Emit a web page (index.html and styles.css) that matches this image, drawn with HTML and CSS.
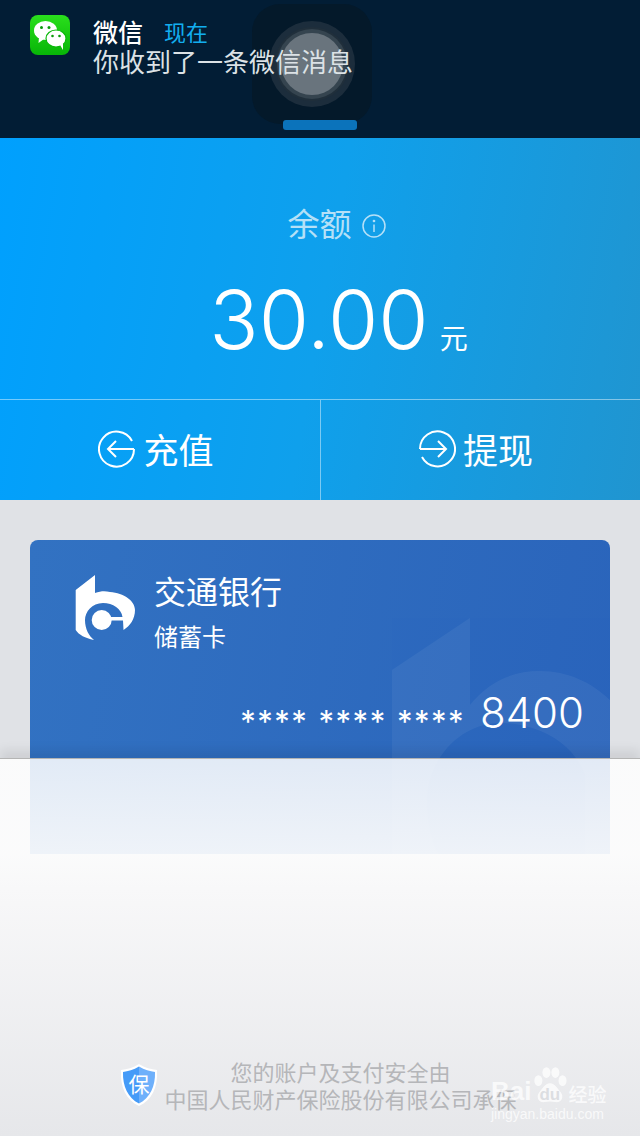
FILE: index.html
```html
<!DOCTYPE html>
<html lang="zh-CN">
<head>
  <meta charset="UTF-8">
  <meta name="viewport" content="width=device-width, initial-scale=1.0">
  <title>余额</title>
  <link rel="stylesheet" href="styles.css">
</head>
<body>
  <div class="page">
    <header class="banner">
      <div class="home-key">
        <div class="home-ring"><div class="home-disc"></div></div>
      </div>
      <div class="home-bar"></div>
      <div class="wx-icon">
        <svg width="40" height="40" viewBox="0 0 40 40">
          <ellipse cx="15.5" cy="15.5" ry="9.5" rx="11.5" fill="#fff"/>
          <path d="M9 22 8.500 28 14 24Z" fill="#fff"/>
          <ellipse cx="26" cy="23.500" rx="10" ry="8.500" fill="#fff" stroke="#0ab80a" stroke-width="1.200"/>
          <path d="M30 30 33 35 33 28Z" fill="#fff"/>
          <circle cx="11.500" cy="12.500" r="1.500" fill="#0a9a0a"/>
          <circle cx="19" cy="12.500" r="1.500" fill="#0a9a0a"/>
          <circle cx="22.500" cy="21" r="1.300" fill="#0a9a0a"/>
          <circle cx="29.500" cy="21" r="1.300" fill="#0a9a0a"/>
        </svg>
      </div>
      <div class="banner-text">
        <div class="banner-head">
          <span class="app-name">微信</span>
          <span class="app-time">现在</span>
        </div>
        <div class="banner-msg">你收到了一条微信消息</div>
      </div>
    </header>

    <section class="balance">
      <div class="balance-top">
        <div class="balance-label">
          <span>余额</span>
          <svg width="24" height="24" viewBox="0 0 24 24" fill="none" stroke="#b5e0f7" stroke-width="1.500">
            <circle cx="12" cy="12" r="11"/>
            <path d="M12 10.500V18"/>
            <circle cx="12" cy="7" r=".6"/>
          </svg>
        </div>
        <div class="balance-amount">
          <span class="amount">30.00</span>
          <span class="unit">元</span>
        </div>
      </div>
      <div class="actions">
        <div class="action">
          <svg width="38" height="38" viewBox="0 0 38 38" fill="none" stroke="#fff" stroke-width="2">
            <path d="M36 19A17.500 17.500 0 1 1 34 11"/>
            <path d="M36 19H11M18 11 10 19 18 27"/>
          </svg>
          <span>充值</span>
        </div>
        <div class="action">
          <svg width="38" height="38" viewBox="0 0 38 38" fill="none" stroke="#fff" stroke-width="2">
            <path d="M2 19A17.500 17.500 0 1 1 4 27"/>
            <path d="M2 19H27M20 11 28 19 20 27"/>
          </svg>
          <span>提现</span>
        </div>
      </div>
    </section>

    <main class="content">
      <div class="card">
        <svg class="card-mark" viewBox="0 0 248 272">
          <path d="M2 60 80 8V95C100 70 125 61 150 61 200 61 245 100 245 150V272H195V165C185 135 150 113 110 113 70 113 37 150 37 190 37 230 50 255 70 272H2Z"/>
        </svg>
        <div class="card-head">
          <svg class="card-logo" viewBox="0 0 62 68">
            <path d="M.7 17 20 2V20C26 18 30 18 35 19 49 20 60 28 60 37 60 46 55 53 48.5 57L48 47.5H30V44H47.5C46.5 36 38 30 28 30 17 30 10 39 10 47 10 56 14 63 19 67 10 65 4 62 .7 57Z"/>
            <circle cx="26.7" cy="47" r="10"/>
          </svg>
          <div>
            <div class="bank-name">交通银行</div>
            <div class="card-type">储蓄卡</div>
          </div>
        </div>
        <div class="card-number">
          <span class="stars">**** **** ****</span>
          <span class="last">8400</span>
        </div>
      </div>
    </main>

    <div class="sheet">
      <div class="insure">
        <svg width="40" height="44" viewBox="0 0 40 44">
          <path d="M20 1C26 5 32 6 38 7 39 24 33 37 20 43 7 37 1 24 2 7 8 6 14 5 20 1Z" fill="#fff"/>
          <path d="M20 3.500C14.500 7 9 8 4 9 3.500 23 9 35 20 40.500Z" fill="#459bf8"/>
          <path d="M20 3.500C25.500 7 31 8 36 9 36.500 23 31 35 20 40.500Z" fill="#6eb0fb"/>
          <text x="20" y="29" text-anchor="middle" class="shield-text">保</text>
        </svg>
        <div class="insure-text">
          <div>您的账户及支付安全由</div>
          <div>中国人民财产保险股份有限公司承保</div>
        </div>
      </div>
    </div>

    <div class="watermark">
      <div class="wm-main">
        <span class="wm-bai">Bai</span>
        <svg class="wm-paw" width="34" height="38" viewBox="0 0 38 42" fill="#fff">
          <ellipse cx="6" cy="15" rx="4.500" ry="6"/>
          <ellipse cx="15" cy="6" rx="4.500" ry="6"/>
          <ellipse cx="25" cy="6" rx="4.500" ry="6"/>
          <ellipse cx="33" cy="15" rx="4.500" ry="6"/>
          <path d="M19 18C13 18 11 24 7 28 3 33 6 40 13 39 17 38 21 38 25 39 32 40 35 33 31 28 27 24 25 18 19 18Z"/>
        </svg>
        <span class="wm-du">du</span>
        <span class="wm-cn">经验</span>
      </div>
      <div class="wm-url">jingyan.baidu.com</div>
    </div>
  </div>
</body>
</html>
```
FILE: styles.css
```css
* { box-sizing: border-box; margin: 0; padding: 0; }
body { font-family: Inter, "Noto Sans CJK SC", sans-serif; background: #e0e2e6; color: #fff; }

.page { position: relative; width: 640px; height: 1136px; overflow: hidden; background: #e0e2e6; }

/* notification banner */
.banner { position: relative; height: 138px; background: #021d35; display: flex; padding: 15px 0 0 30px; gap: 23px; }
.home-key { position: absolute; left: 252px; top: 4px; width: 120px; height: 120px; border-radius: 28px; background: #04192a; display: flex; align-items: center; justify-content: center; }
.home-ring { width: 86px; height: 86px; border-radius: 50%; background: #1c2d3c; display: flex; align-items: center; justify-content: center; }
.home-disc { width: 62px; height: 62px; border-radius: 50%; background: #69747d; box-shadow: 0 0 0 4px #35444f, 0 0 0 6px #202f3b; }
.home-bar { position: absolute; left: 283px; top: 120px; width: 74px; height: 10px; border-radius: 3px; background: #0b73bb; }
.wx-icon { width: 40px; height: 40px; border-radius: 8px; background: linear-gradient(#2adf1c, #07b507); flex-shrink: 0; }
.banner-text { position: relative; margin-top: -1px; }
.banner-head { display: flex; align-items: center; gap: 21px; height: 33px; }
.app-name { font-size: 25px; font-weight: 500; color: #fff; }
.app-time { font-size: 22px; color: #12aef0; }
.banner-msg { font-size: 26px; line-height: 32px; color: #dce2e6; white-space: nowrap; }

/* balance panel */
.balance { height: 362px; background: linear-gradient(100deg, #00a0fe 0%, #0fa0ec 50%, #2095d0 100%); }
.balance-top { height: 261px; display: flex; flex-direction: column; align-items: center; }
.balance-label { display: flex; align-items: center; gap: 10px; margin-top: 61px; height: 46px; font-size: 32px; color: #b5e0f7; margin-left: 33px; }
.balance-label svg { margin-top: 7px; }
.balance-amount { display: flex; align-items: baseline; gap: 11px; margin-top: 25px; margin-left: 37px; }
.amount { font-size: 81.500px; font-weight: 300; line-height: 100px; }
.unit { font-size: 28px; }
.actions { height: 101px; display: flex; border-top: 1px solid rgba(255, 255, 255, .45); }
.action { flex: 0 0 50%; display: flex; align-items: center; justify-content: center; gap: 7px; font-size: 35px; padding-right: 8px; }
.action svg { margin-bottom: 2px; }
.action span { margin-bottom: 4px; }
.action + .action { border-left: 1px solid rgba(255, 255, 255, .45); padding-right: 10px; }

/* bank card */
.content { padding: 40px 30px 0; }
.card { position: relative; height: 314px; border-radius: 8px 8px 0 0; overflow: hidden; background: linear-gradient(100deg, #3272c2, #2a64bb); padding: 33px 26px 0 45px; }
.card-mark { position: absolute; left: 360px; top: 70px; width: 248px; height: 272px; fill: #fff; opacity: .05; }
.card-head { position: relative; display: flex; gap: 17px; }
.card-logo { width: 62px; height: 68px; fill: #fff; flex-shrink: 0; }
.bank-name { font-size: 32px; line-height: 40px; }
.card-type { font-size: 24px; line-height: 34px; margin-top: 8px; }
.card-number { position: relative; display: flex; justify-content: flex-end; align-items: flex-start; gap: 15px; margin-top: 32px; }
.stars { font-size: 31px; font-weight: 400; line-height: 48px; margin-top: 11px; white-space: nowrap; letter-spacing: 1.500px; }
.last { font-size: 42px; font-weight: 300; line-height: 52px; }

/* sheet sliding up over the page */
.sheet { position: absolute; left: 0; right: 0; top: 758px; bottom: 0; border-top: 1px solid #b4b4b4; box-shadow: 0 -8px 10px rgba(0, 0, 0, .08); background: linear-gradient(rgba(255, 255, 255, .86) 0, rgba(253, 253, 253, .93) 95px, #f8f8f9 130px, #e6e7ea 100%); display: flex; align-items: flex-end; justify-content: center; }
.insure { display: flex; align-items: center; gap: 5px; margin: 0 0 22px -4px; }
.insure svg { margin-top: -4px; flex-shrink: 0; }
.shield-text { font-family: "Noto Sans CJK SC", sans-serif; font-size: 21px; fill: #fff; }
.insure-text { font-size: 22px; line-height: 27px; color: #b5b6b9; text-align: center; white-space: nowrap; }

/* site watermark */
.watermark { position: absolute; left: 491px; top: 1067px; width: 150px; color: #fff; opacity: .75; }
.wm-main { display: flex; align-items: flex-end; height: 38px; font-family: "Liberation Sans", sans-serif; font-weight: 700; }
.wm-bai { font-size: 26px; line-height: 28px; }
.wm-paw { margin-left: 2px; flex-shrink: 0; }
.wm-du { font-size: 17px; color: #d8dade; line-height: 20px; margin-left: -28px; width: 28px; }
.wm-cn { font-family: "Noto Sans CJK SC", sans-serif; font-size: 19px; font-weight: 500; line-height: 22px; margin: 0 0 0 1px; }
.wm-url { font-family: "Liberation Sans", sans-serif; font-size: 14px; line-height: 18px; white-space: nowrap; }
```
